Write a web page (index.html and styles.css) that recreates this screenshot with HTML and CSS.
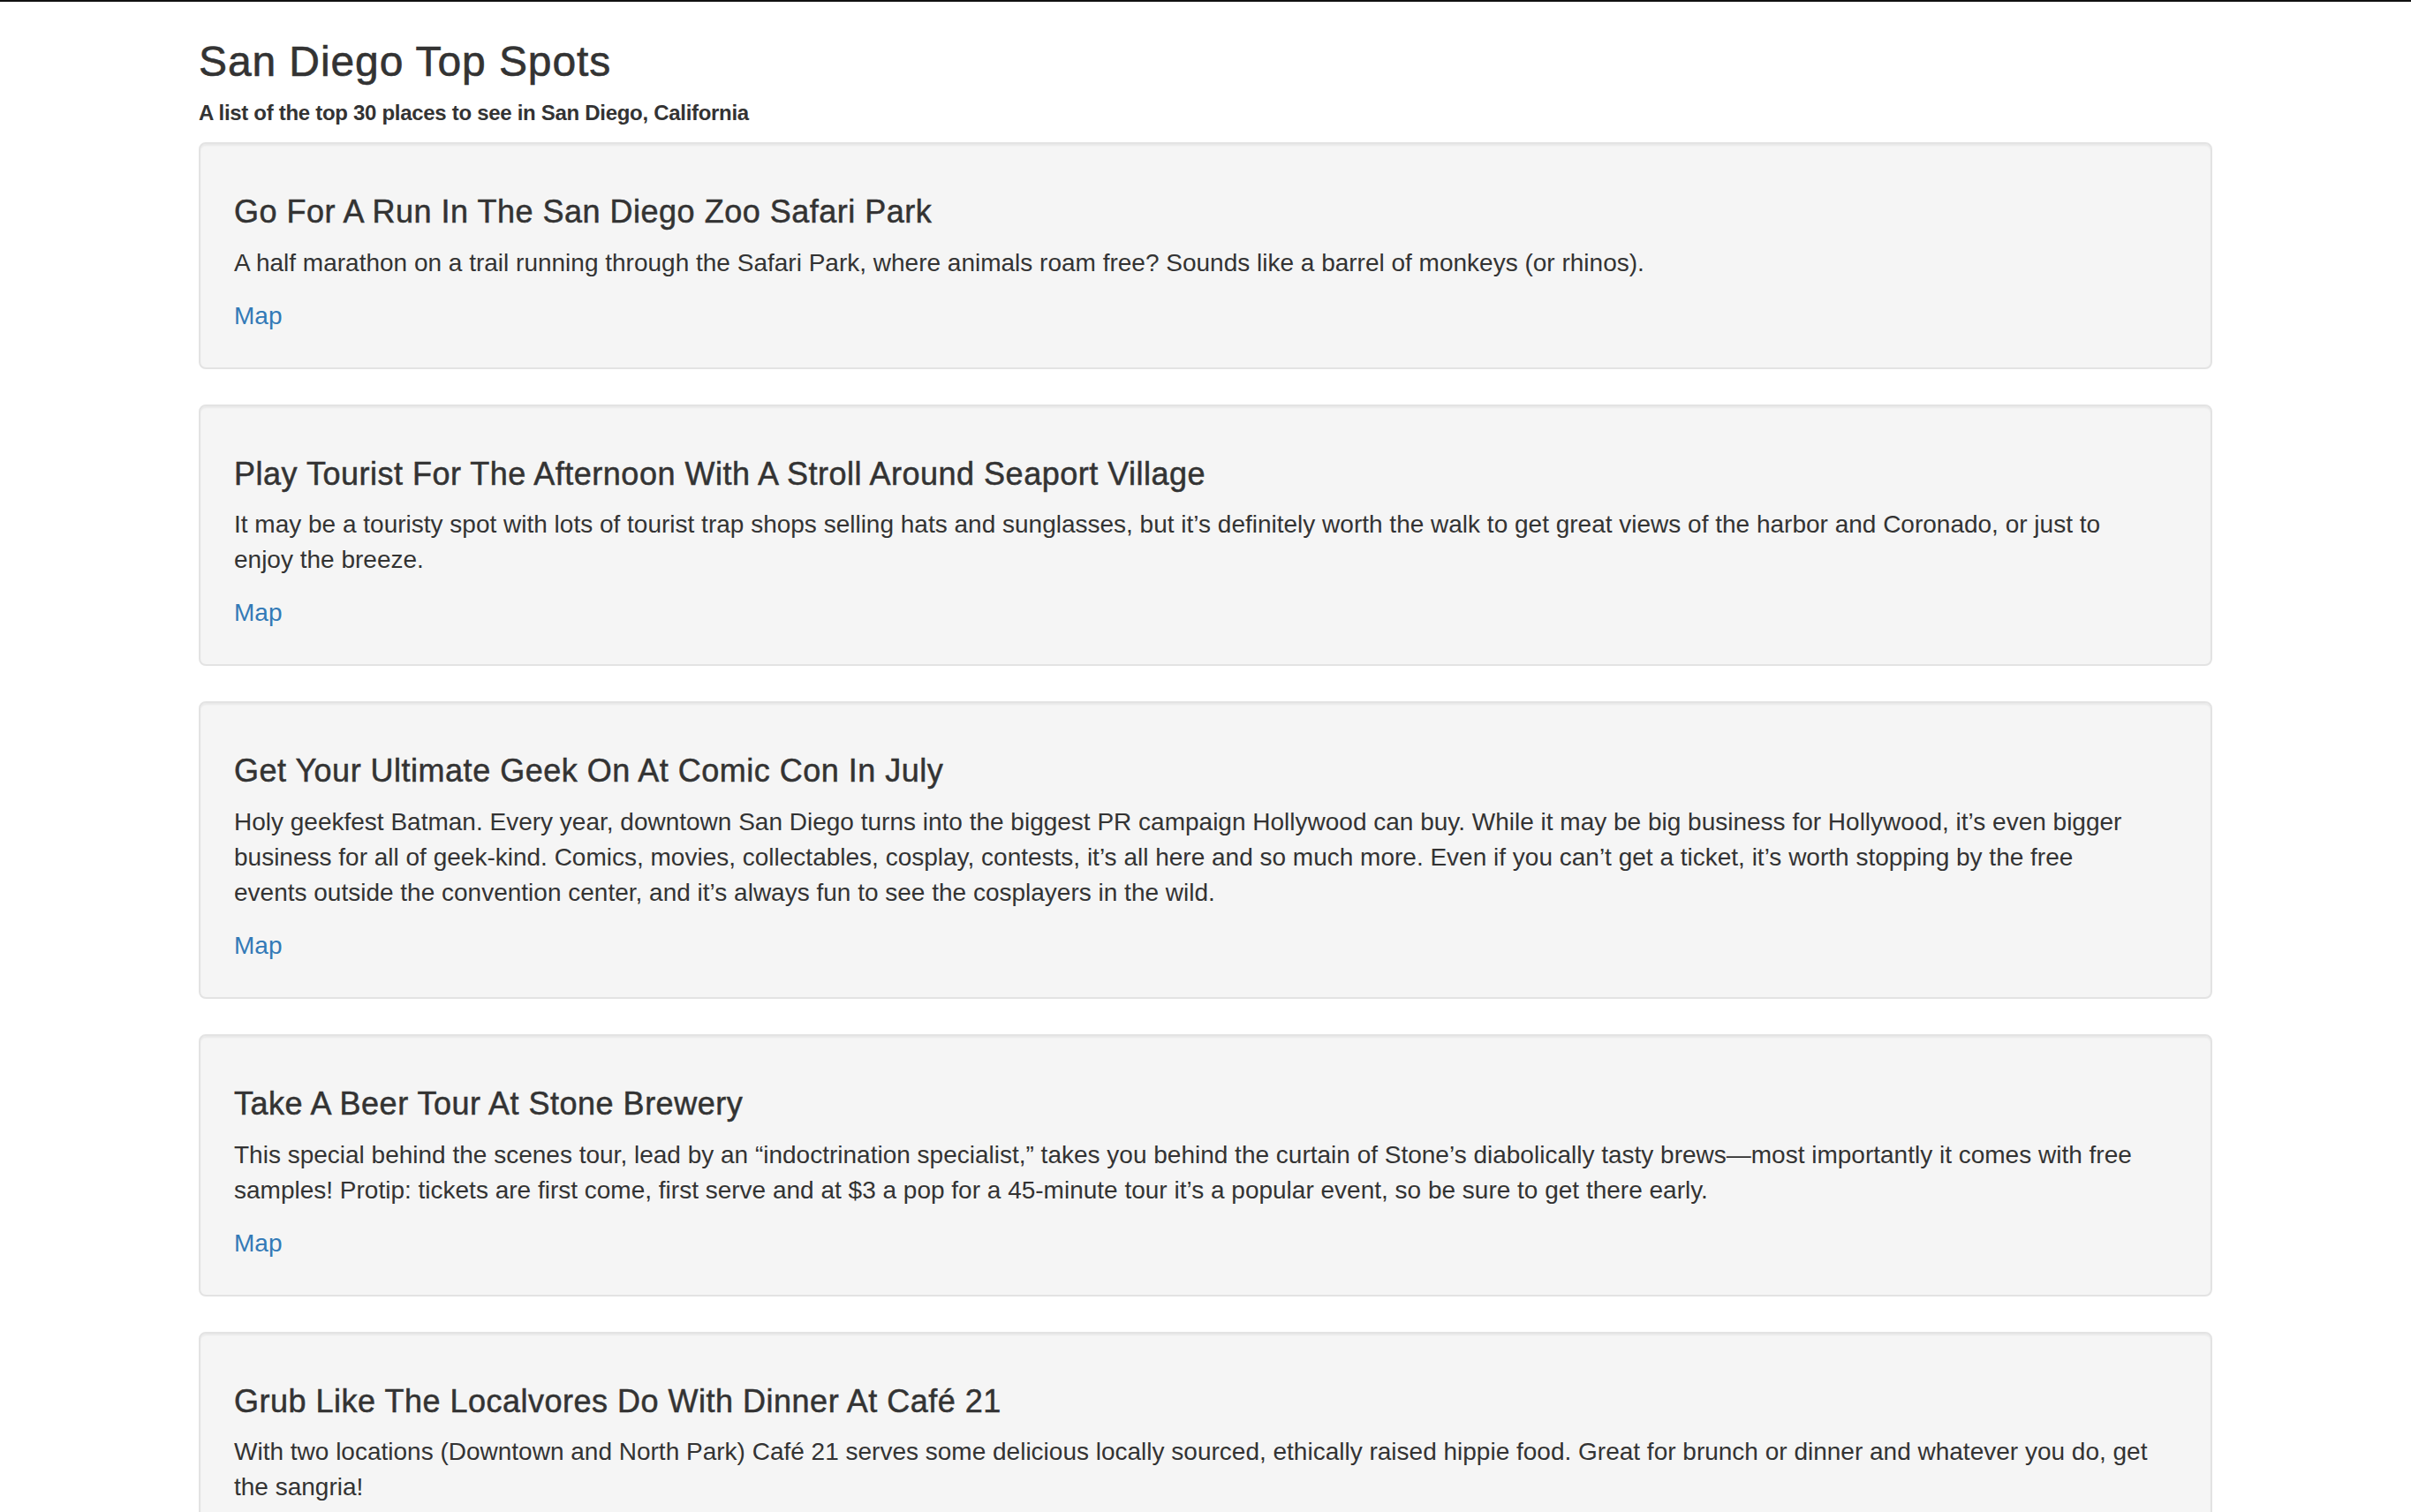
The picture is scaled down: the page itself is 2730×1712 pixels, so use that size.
FILE: index.html
```html
<!DOCTYPE html>
<html lang="en">
<head>
<meta charset="utf-8">
<title>San Diego Top Spots</title>
<link rel="stylesheet" href="styles.css">
</head>
<body>
<div class="container">
  <h3 class="page-title">San Diego Top Spots</h3>
  <h6 class="page-subtitle">A list of the top 30 places to see in San Diego, California</h6>

  <div class="well">
    <h4 class="spot-title">Go For A Run In The San Diego Zoo Safari Park</h4>
    <p class="spot-text">A half marathon on a trail running through the Safari Park, where animals roam free? Sounds like a barrel of monkeys (or rhinos).</p>
    <a class="spot-link" href="#">Map</a>
  </div>

  <div class="well">
    <h4 class="spot-title">Play Tourist For The Afternoon With A Stroll Around Seaport Village</h4>
    <p class="spot-text">It may be a touristy spot with lots of tourist trap shops selling hats and sunglasses, but it’s definitely worth the walk to get great views of the harbor and Coronado, or just to enjoy the breeze.</p>
    <a class="spot-link" href="#">Map</a>
  </div>

  <div class="well">
    <h4 class="spot-title">Get Your Ultimate Geek On At Comic Con In July</h4>
    <p class="spot-text">Holy geekfest Batman. Every year, downtown San Diego turns into the biggest PR campaign Hollywood can buy. While it may be big business for Hollywood, it’s even bigger business for all of geek-kind. Comics, movies, collectables, cosplay, contests, it’s all here and so much more. Even if you can’t get a ticket, it’s worth stopping by the free events outside the convention center, and it’s always fun to see the cosplayers in the wild.</p>
    <a class="spot-link" href="#">Map</a>
  </div>

  <div class="well">
    <h4 class="spot-title">Take A Beer Tour At Stone Brewery</h4>
    <p class="spot-text">This special behind the scenes tour, lead by an “indoctrination specialist,” takes you behind the curtain of Stone’s diabolically tasty brews—most importantly it comes with free samples! Protip: tickets are first come, first serve and at $3 a pop for a 45-minute tour it’s a popular event, so be sure to get there early.</p>
    <a class="spot-link" href="#">Map</a>
  </div>

  <div class="well">
    <h4 class="spot-title">Grub Like The Localvores Do With Dinner At Café 21</h4>
    <p class="spot-text">With two locations (Downtown and North Park) Café 21 serves some delicious locally sourced, ethically raised hippie food. Great for brunch or dinner and whatever you do, get the sangria!</p>
    <a class="spot-link" href="#">Map</a>
  </div>
</div>
</body>
</html>
```

FILE: styles.css
```css
html, body {
  margin: 0;
  padding: 0;
}

body {
  background: #fff;
  color: #333;
  font-family: "Liberation Sans", Arial, sans-serif;
  font-size: 28px;
  line-height: 40px;
  border-top: 2px solid #111;
}

.container {
  width: 2280px;
  margin: 0 auto;
}

.page-title {
  font-size: 48px;
  font-weight: 500;
  line-height: 52.8px;
  letter-spacing: 0.9px;
  -webkit-text-stroke: 0.6px #333;
  margin: 42px 0 18px;
  color: #333;
}

.page-subtitle {
  font-size: 24px;
  font-weight: 700;
  line-height: 26.4px;
  letter-spacing: -0.3px;
  margin: 18px 0 20px;
  color: #333;
}

.well {
  background: #f5f5f5;
  border: 2px solid #e3e3e3;
  border-radius: 8px;
  box-shadow: inset 0 2px 2px rgba(0, 0, 0, 0.05);
  padding: 38px;
  margin-bottom: 40px;
}

.spot-title {
  font-size: 36px;
  font-weight: 500;
  line-height: 39.6px;
  letter-spacing: 0.5px;
  -webkit-text-stroke: 0.5px #333;
  margin: 19px 0 18px;
  color: #333;
}

.spot-text {
  margin: 0 0 20px;
  max-width: 2169px;
}

.spot-link {
  display: block;
  color: #337ab7;
  text-decoration: none;
}
```
